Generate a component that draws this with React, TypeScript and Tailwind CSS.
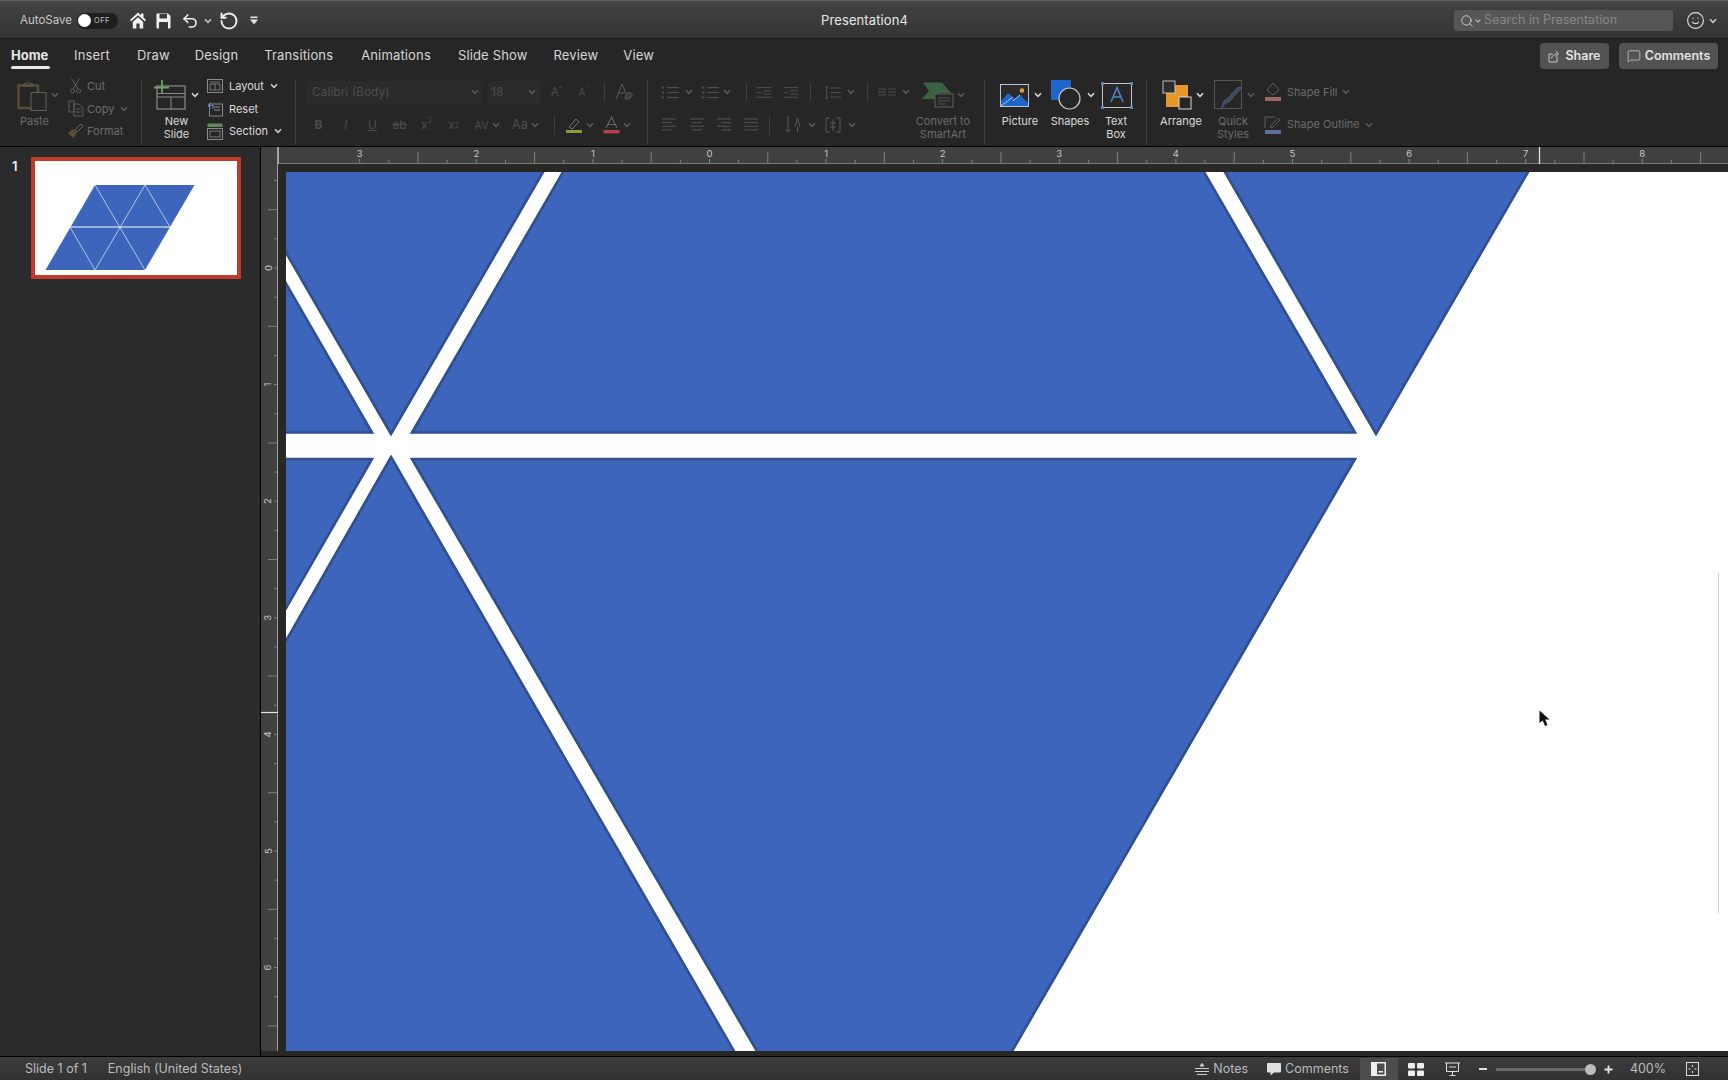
import React from "react";
import { Undo2, RotateCcw, Search, Smile, MessageSquare } from "lucide-react";

const DIM = "#4d4d4d";

function Chev({ c = "#d0d0d0", className = "" }: { c?: string; className?: string }) {
  return (
    <svg width="8" height="6" viewBox="0 0 8 6" className={"shrink-0 " + className}>
      <path d="M1 1.2 L4 4.4 L7 1.2" fill="none" stroke={c} strokeWidth="1.5" />
    </svg>
  );
}

function Sep({ className = "" }: { className?: string }) {
  return <div className={"w-px shrink-0 bg-[#3e3e3e] " + className} />;
}

function Lines({ w = 20, kind = "left" }: { w?: number; kind?: "left" | "center" | "right" | "just" | "bullet" | "num" | "indL" | "indR" | "space" | "cols" }) {
  const s = DIM;
  const rows: React.ReactNode[] = [];
  if (kind === "left") [[1, 15], [1, 11], [1, 15], [1, 11]].forEach((r, i) => rows.push(<path key={i} d={`M${r[0]} ${3 + i * 3.6}H${r[1]}`} />));
  if (kind === "center") [[2, 16], [4, 14], [2, 16], [4, 14]].forEach((r, i) => rows.push(<path key={i} d={`M${r[0]} ${3 + i * 3.6}H${r[1]}`} />));
  if (kind === "right") [[2, 16], [6, 16], [2, 16], [6, 16]].forEach((r, i) => rows.push(<path key={i} d={`M${r[0]} ${3 + i * 3.6}H${r[1]}`} />));
  if (kind === "just") [0, 1, 2, 3].forEach((i) => rows.push(<path key={i} d={`M2 ${3 + i * 3.6}H16`} />));
  if (kind === "bullet" || kind === "num") [0, 1, 2].forEach((i) => rows.push(<g key={i}><path d={`M7 ${3.5 + i * 5}H19`} /><path d={`M2 ${3.5 + i * 5}H${kind === "num" ? 4.5 : 4}`} strokeWidth="2" /></g>));
  if (kind === "indL" || kind === "indR") {
    [0, 1, 2, 3].forEach((i) => rows.push(<path key={i} d={`M${i === 0 || i === 3 ? 2 : 9} ${3 + i * 3.6}H18`} />));
    rows.push(<path key="a" d={kind === "indL" ? "M2 8.5H7" : "M7 8.5H2"} />);
  }
  if (kind === "space") {
    [0, 1, 2].forEach((i) => rows.push(<path key={i} d={`M7 ${3.5 + i * 5}H19`} />));
    rows.push(<path key="v" d="M3 1V16M1.5 2.5H4.5M1.5 14.5H4.5" />);
  }
  if (kind === "cols") {
    [0, 1, 2].forEach((i) => rows.push(<path key={i} d={`M1 ${5 + i * 3}H9M11 ${5 + i * 3}H19`} />));
  }
  return (
    <svg width={w} height="17" viewBox="0 0 20 17" className="shrink-0" fill="none" stroke={s} strokeWidth="1.2">
      {rows}
    </svg>
  );
}

function Big({ className = "", icon, label, dim = false }: { className?: string; icon: React.ReactNode; label: string[]; dim?: boolean }) {
  return (
    <div className={"flex flex-col items-center shrink-0 " + className}>
      <div className="h-[40px] w-full flex items-center">{icon}</div>
      <div className={"text-[11px] leading-[13px] text-center " + (dim ? "text-[#6c6c6c]" : "text-[#dcdcdc]")}>
        {label.map((l) => (
          <div key={l}>{l}</div>
        ))}
      </div>
    </div>
  );
}

function RowItem({ icon, text, chev, dim, chevClass = "ml-[6px]" }: { icon: React.ReactNode; text: string; chev?: boolean; dim?: boolean; chevClass?: string }) {
  return (
    <div className="h-[22.5px] flex items-center">
      {icon}
      <span className={"text-[11px] " + (dim ? "text-[#6c6c6c]" : "text-[#dcdcdc]")}>{text}</span>
      {chev && <Chev c={dim ? "#5c5c5c" : "#d8d8d8"} className={chevClass} />}
    </div>
  );
}

function Cell({ className = "", children }: { className?: string; children: React.ReactNode }) {
  return <div className={"flex items-center justify-center shrink-0 text-[#4d4d4d] " + className}>{children}</div>;
}

function Tab({ t, className = "" }: { t: string; className?: string }) {
  return <span className={"mt-[8px] text-[13px] leading-[16px] text-[#d6d6d6] tracking-[0.15px] " + className}>{t}</span>;
}

function ClipIcon() {
  return (
    <svg width="31" height="31" viewBox="0 0 31 31" className="shrink-0">
      <path d="M1.5 5.5H21V28H1.5Z" fill="none" stroke="#5c4c36" strokeWidth="2.4" />
      <path d="M7 6V3.5H9.5L11 1.5L12.8 3.5H15.5V6Z" fill="none" stroke="#5a5a5a" strokeWidth="1" />
      <rect x="14" y="12.5" width="15" height="18" fill="#262626" stroke="#5f5f5f" strokeWidth="1" />
    </svg>
  );
}

function NewSlideIcon() {
  return (
    <svg width="32" height="31" viewBox="0 0 32 31" className="shrink-0">
      <rect x="3" y="6" width="28" height="23" fill="none" stroke="#8a8a8a" strokeWidth="1.2" />
      <path d="M3 13.5H31M3 17H31M17 17V29" fill="none" stroke="#8a8a8a" strokeWidth="1" />
      <path d="M8 0V14M0 7.5H15" stroke="#6aa35f" strokeWidth="1.8" />
    </svg>
  );
}

function Polys() {
  return (
    <g fill="#3c65bb" stroke="#2f4f8e" strokeWidth="2.6">
      <polygon points="270,160 550,160 391,434 270,225" />
      <polygon points="270,256 372,432.5 270,432.5" />
      <polygon points="570,160 1197,160 1355,432.5 412,432.5" />
      <polygon points="1218,160 1535,160 1376,434" />
      <polygon points="270,459 372,459 270,636" />
      <polygon points="391,457 742,1065 270,1065 270,669" />
      <polygon points="412,459 1355,459 1004,1065 765,1065" />
    </g>
  );
}

const INCH = 116.6;

function HRuler() {
  const X0 = 709.5 - 278;
  const ticks: React.ReactNode[] = [];
  for (let q = -12; q <= 35; q++) {
    const x = X0 + (q * INCH) / 4;
    if (x < 0) continue;
    const mod = ((q % 4) + 4) % 4;
    const y1 = mod === 2 ? 5 : mod === 0 ? 12 : 13;
    ticks.push(<path key={q} d={`M${x} ${y1}V16`} stroke="#808080" strokeWidth="1" />);
    if (mod === 0)
      ticks.push(
        <text key={"t" + q} x={x} y={10} fontSize="9.5" fill="#c8c8c8" textAnchor="middle">
          {Math.abs(q / 4)}
        </text>
      );
  }
  return (
    <svg width="1450" height="17" className="block shrink-0 bg-[#404040]">
      <path d="M0 16.5H1450" stroke="#787878" />
      <path d="M0.5 0V17" stroke="#a8a8a8" />
      {ticks}
      <path d="M1261.5 0V17" stroke="#e8e8e8" strokeWidth="1.2" />
    </svg>
  );
}

function VRuler() {
  const Y0 = 268 - 147;
  const ticks: React.ReactNode[] = [];
  for (let q = -3; q <= 27; q++) {
    const y = Y0 + (q * INCH) / 4;
    const mod = ((q % 4) + 4) % 4;
    const x1 = mod === 2 ? 7 : 13;
    ticks.push(<path key={q} d={`M${x1} ${y}H16`} stroke="#808080" strokeWidth="1" />);
    if (mod === 0)
      ticks.push(
        <text key={"t" + q} x={7} y={y} fontSize="9.5" fill="#c8c8c8" textAnchor="middle" dominantBaseline="central" transform={`rotate(-90 7 ${y})`}>
          {Math.abs(q / 4)}
        </text>
      );
  }
  return (
    <svg width="17" height="904" className="block shrink-0 bg-[#404040]">
      <path d="M16.5 0V904" stroke="#a0a0a0" />
      {ticks}
      <path d="M0 565.5H17" stroke="#e8e8e8" strokeWidth="1.2" />
    </svg>
  );
}

export default function App() {
  return (
    <div className="w-[1728px] h-[1080px] flex flex-col overflow-hidden bg-[#262626] font-['Inter','Noto_Sans',sans-serif] text-[#d8d8d8]">
      {/* title bar */}
      <div className="h-[39px] shrink-0 flex items-center pt-[2px] bg-gradient-to-b from-[#434343] to-[#333333] border-t border-t-[#606060] border-b border-b-[#1c1c1c]">
        <div className="flex-1 flex items-center pl-[20px]">
          <span className="w-[51px] text-[11.5px] text-[#c8c8c8]">AutoSave</span>
          <div className="ml-[6px] w-[41px] h-[16px] rounded-full bg-[#1e1e1e] flex items-center pl-[1px]">
            <div className="w-[13px] h-[13px] rounded-full bg-white" />
            <span className="ml-[3px] text-[7.5px] text-[#c0c0c0] tracking-[0.4px]">OFF</span>
          </div>
          <svg width="16" height="17" viewBox="0 0 16 17" className="ml-[12px] shrink-0" fill="#f2f2f2">
            <path d="M8 0.5 L0 8 L1.2 9.3 L8 3.2 L14.8 9.3 L16 8 L13.5 5.6 V1.5 H11 V3.3Z" />
            <path d="M2.8 10 L8 5.2 L13.2 10 V16.5 H9.6 V11.5 H6.4 V16.5 H2.8Z" />
          </svg>
          <svg width="15" height="16" viewBox="0 0 15 16" className="ml-[10px] shrink-0">
            <path fillRule="evenodd" fill="#f2f2f2" d="M1.5 0.5H12L14.5 3V14.5C14.5 15 14 15.5 13.5 15.5H1.5C1 15.5 0.5 15 0.5 14.5V1.5C0.5 1 1 0.5 1.5 0.5ZM3.5 1V5.5H11V1ZM3 9V15.5H12V9Z" />
          </svg>
          <Undo2 size={18} strokeWidth={2.2} color="#eeeeee" className="ml-[10px] shrink-0" />
          <Chev c="#d0d0d0" className="ml-[5px]" />
          <RotateCcw size={20} strokeWidth={2.3} color="#eeeeee" className="ml-[7px] shrink-0" />
          <svg width="8" height="9" viewBox="0 0 8 9" className="ml-[11px] shrink-0" fill="#e4e4e4">
            <rect x="0.5" y="0.5" width="7" height="1.6" />
            <path d="M0 3.6H8L4 8.4Z" />
          </svg>
        </div>
        <div className="text-[13px] text-[#e8e8e8] tracking-[0.1px] mr-[8px]">Presentation4</div>
        <div className="flex-1 flex items-center justify-end pr-[11px]">
          <div className="w-[219px] h-[21px] rounded-[3px] bg-[#565656] flex items-center pl-[6px]">
            <Search size={14} color="#d0d0d0" strokeWidth={1.6} className="shrink-0" />
            <Chev c="#c0c0c0" className="w-[6px] ml-[1px]" />
            <span className="ml-[3px] text-[12.5px] text-[#868686]">Search in Presentation</span>
          </div>
          <Smile size={19} color="#dedede" strokeWidth={1.4} className="ml-[13px] shrink-0" />
          <Chev c="#d0d0d0" className="ml-[4px]" />
        </div>
      </div>

      {/* tabs */}
      <div className="h-[36px] shrink-0 flex items-start pl-[11px] pr-[10px] bg-[#262626]">
        <div className="flex items-start">
          <div className="flex flex-col w-[39px]">
            <span className="mt-[8px] text-[13px] leading-[16px] font-bold text-[#e6e6e6]">Home</span>
            <div className="mt-[3px] h-[3px] rounded-full bg-[#e8e8e8]" />
          </div>
          <Tab t="Insert" className="ml-[24px]" />
          <Tab t="Draw" className="ml-[27px]" />
          <Tab t="Design" className="ml-[25px]" />
          <Tab t="Transitions" className="ml-[26px]" />
          <Tab t="Animations" className="ml-[28px]" />
          <Tab t="Slide Show" className="ml-[27px]" />
          <Tab t="Review" className="ml-[26px]" />
          <Tab t="View" className="ml-[25px]" />
        </div>
        <div className="ml-auto flex items-center gap-[10px] mt-[4px]">
          <div className="w-[69px] h-[26px] rounded-[4px] bg-[#535353] flex items-center justify-center gap-[4px] text-[12.5px] font-semibold text-[#e2e2e2]">
            <svg width="13" height="13" viewBox="0 0 13 13" fill="none" stroke="#c8c8c8" strokeWidth="1">
              <path d="M9 6.5V12H1V4H4.5" />
              <path d="M3.5 8.5C4 5.5 6.5 3.8 9.5 3.8M7.6 1L10.6 3.8L7.6 6.5" />
            </svg>
            Share
          </div>
          <div className="w-[99px] h-[26px] rounded-[4px] bg-[#535353] flex items-center justify-center gap-[4px] text-[12.5px] font-semibold text-[#e2e2e2]">
            <MessageSquare size={14} color="#d0d0d0" strokeWidth={1.3} />
            Comments
          </div>
        </div>
      </div>

      {/* ribbon */}
      <div className="h-[72px] shrink-0 flex bg-[#262626] border-b border-b-black">
        {/* clipboard */}
        <div className="w-[141px] shrink-0 flex">
          <Big
            className="w-[64px] pl-[5px]"
            dim
            label={["Paste"]}
            icon={
              <div className="flex items-center pl-[12px]">
                <ClipIcon />
                <Chev c="#5c5c5c" className="ml-[3px]" />
              </div>
            }
          />
          <div className="flex flex-col">
            <RowItem
              dim
              text="Cut"
              icon={
                <div className="w-[23px] flex justify-center">
                  <svg width="11" height="16" viewBox="0 0 11 16" fill="none" stroke="#5f5f5f" strokeWidth="1">
                    <path d="M1.5 0.5L8 11M9.5 0.5L3 11" />
                    <circle cx="2.5" cy="13" r="2" />
                    <circle cx="8.5" cy="13" r="2" />
                  </svg>
                </div>
              }
            />
            <RowItem
              dim
              chev
              text="Copy"
              icon={
                <div className="w-[23px] flex justify-center">
                  <svg width="16" height="17" viewBox="0 0 16 17" fill="none" stroke="#5f5f5f" strokeWidth="1">
                    <path d="M1 1H6V12H1ZM6 4H11L15 8V16H6ZM8 9H13M8 12H13" />
                  </svg>
                </div>
              }
            />
            <RowItem
              dim
              text="Format"
              icon={
                <div className="w-[23px] flex justify-center">
                  <svg width="17" height="16" viewBox="0 0 17 16">
                    <path d="M1 10 L6 6 L10 10 L6 15 Z" fill="#5a4f3a" />
                    <path d="M8 7 L14 1 L16 3 L10 9Z" fill="none" stroke="#666" />
                  </svg>
                </div>
              }
            />
          </div>
        </div>
        <Sep className="h-[66px] mt-[4px]" />
        {/* slides */}
        <div className="w-[153px] shrink-0 flex">
          <Big
            className="w-[59px] ml-[5px]"
            label={["New", "Slide"]}
            icon={
              <div className="flex items-center pl-[7px]">
                <NewSlideIcon />
                <Chev c="#e0e0e0" className="ml-[5px]" />
              </div>
            }
          />
          <div className="flex flex-col ml-[1px]">
            <RowItem
              chev
              text="Layout"
              icon={
                <svg width="16" height="16" viewBox="0 0 16 16" fill="none" stroke="#8a8a8a" className="mr-[6px]">
                  <rect x="0.5" y="1.5" width="15" height="13" />
                  <path d="M3 4H13M3 6H13V12H3ZM8 6V12" strokeWidth="0.8" />
                </svg>
              }
            />
            <RowItem
              text="Reset"
              icon={
                <svg width="16" height="16" viewBox="0 0 16 16" fill="none" className="mr-[6px]">
                  <rect x="2.5" y="3" width="13" height="12" stroke="#8a8a8a" />
                  <path d="M7 6H13M7 9H13" stroke="#8a8a8a" />
                  <path d="M1 4.5L3.5 1.5M1 4.5L3.5 7M1 4.5H6V8" stroke="#5e86b8" strokeWidth="1.1" />
                </svg>
              }
            />
            <RowItem
              chev
              text="Section"
              icon={
                <svg width="16" height="17" viewBox="0 0 16 17" fill="none" className="mr-[6px]">
                  <rect x="0.5" y="0.5" width="15" height="3.5" fill="#5f8a5a" />
                  <rect x="0.5" y="5.5" width="15" height="11" stroke="#8a8a8a" />
                  <rect x="3" y="8" width="10" height="6" stroke="#8a8a8a" strokeWidth="0.8" />
                </svg>
              }
            />
          </div>
        </div>
        <Sep className="h-[66px] mt-[4px]" />
        {/* font */}
        <div className="w-[351px] shrink-0 flex flex-col pt-[1px]">
          <div className="h-[32px] flex items-center pl-[11px]">
            <div className="w-[176px] h-[23px] bg-[#2b2b2b] flex items-center justify-between pl-[5px] pr-[4px] text-[12px] text-[#4d4d4d]">
              Calibri (Body)
              <Chev c="#5c5c5c" />
            </div>
            <div className="ml-[5px] w-[52px] h-[23px] bg-[#2b2b2b] flex items-center justify-between pl-[3px] pr-[4px] text-[12px] text-[#4d4d4d]">
              18
              <Chev c="#5c5c5c" />
            </div>
            <Cell className="w-[27px] ml-[3px] text-[12px]">A<sup className="text-[7px]">^</sup></Cell>
            <Cell className="w-[27px] text-[10px]">A<sup className="text-[7px]">ˇ</sup></Cell>
            <Sep className="h-[20px] ml-[7px]" />
            <svg width="20" height="20" viewBox="0 0 20 20" className="ml-[9px] shrink-0" fill="none" stroke="#5a5a5a">
              <path d="M2 17L8 2L13 14" />
              <path d="M5 11H11" />
              <path d="M11 15L15 10L18.5 13L15 17H12Z" fill="#3a3a3a" />
            </svg>
          </div>
          <div className="h-[33px] flex items-center pl-[9px]">
            <Cell className="w-[27px] text-[12px] font-bold">B</Cell>
            <Cell className="w-[27px] text-[12px] italic">I</Cell>
            <Cell className="w-[27px] text-[12px] underline">U</Cell>
            <Cell className="w-[27px] text-[12px] line-through">ab</Cell>
            <Cell className="w-[27px] text-[12px]">x<sup className="text-[7px]">2</sup></Cell>
            <Cell className="w-[27px] text-[12px]">x<sub className="text-[7px]">2</sub></Cell>
            <Cell className="w-[38px] pl-[2px] gap-[3px] text-[11px]">
              <span className="leading-[10px]">AV</span>
              <Chev c="#5c5c5c" />
            </Cell>
            <Cell className="w-[40px] pl-[1px] gap-[3px] text-[13px]">
              Aa
              <Chev c="#5c5c5c" />
            </Cell>
            <Sep className="h-[20px] ml-[9px]" />
            <Cell className="w-[38px] ml-[5px] gap-[3px]">
              <svg width="18" height="18" viewBox="0 0 18 18" fill="none">
                <path d="M4 11L11 3L14 6L7 13Z" stroke="#777" />
                <rect x="1" y="14" width="16" height="3" fill="#8c9c3d" />
              </svg>
              <Chev c="#5c5c5c" />
            </Cell>
            <Cell className="w-[38px] gap-[3px]">
              <svg width="17" height="18" viewBox="0 0 17 18" fill="none">
                <path d="M3 12L8.5 1L14 12M5 8.5H12" stroke="#666" strokeWidth="1.1" />
                <rect x="0.5" y="14" width="16" height="3.4" fill="#b2444f" />
              </svg>
              <Chev c="#5c5c5c" />
            </Cell>
          </div>
        </div>
        <Sep className="h-[66px] mt-[4px]" />
        {/* paragraph */}
        <div className="w-[336px] shrink-0 flex">
          <div className="w-[262px] flex flex-col pt-[1px]">
            <div className="h-[32px] flex items-center pl-[12px]">
              <Lines kind="bullet" />
              <Chev c="#5c5c5c" className="ml-[5px]" />
              <div className="ml-[7px]"><Lines kind="num" /></div>
              <Chev c="#5c5c5c" className="ml-[3px]" />
              <Sep className="h-[20px] ml-[15px]" />
              <div className="ml-[8px]"><Lines w={18} kind="indL" /></div>
              <div className="ml-[9px]"><Lines w={18} kind="indR" /></div>
              <Sep className="h-[20px] ml-[10px]" />
              <div className="ml-[13px]"><Lines w={18} kind="space" /></div>
              <Chev c="#5c5c5c" className="ml-[5px]" />
              <Sep className="h-[20px] ml-[12px]" />
              <div className="ml-[9px]"><Lines kind="cols" /></div>
              <Chev c="#5c5c5c" className="ml-[5px]" />
            </div>
            <div className="h-[33px] flex items-center pl-[13px] text-[#4d4d4d]">
              <div className="flex gap-[7px]">
                <Lines kind="left" />
                <Lines kind="center" />
                <Lines kind="right" />
                <Lines kind="just" />
              </div>
              <Sep className="h-[20px] ml-[7px]" />
              <svg width="16" height="19" viewBox="0 0 16 19" className="ml-[15px] shrink-0" fill="none" stroke="#5a5a5a">
                <path d="M3 1V17M0.5 14.5L3 17L5.5 14.5M10 12L12.5 3L15 12M12.5 12V17" />
              </svg>
              <Chev c="#5c5c5c" className="ml-[7px]" />
              <svg width="16" height="16" viewBox="0 0 16 16" className="ml-[9px] shrink-0" fill="none" stroke="#5a5a5a">
                <path d="M5 1H1V15H5M11 1H15V15H11M8 2V14M5 6H11M5 10H11" />
              </svg>
              <Chev c="#5c5c5c" className="ml-[7px]" />
            </div>
          </div>
          <Big
            className="w-[66px]"
            dim
            label={["Convert to", "SmartArt"]}
            icon={
              <div className="flex items-center pl-[10px]">
                <svg width="34" height="26" viewBox="0 0 34 26" className="shrink-0">
                  <path d="M3 0.5H22L31 11H19V17H1.5L9 9Z" fill="#3c6145" />
                  <rect x="15" y="12" width="18" height="13" fill="#262626" stroke="#5f5f5f" />
                  <path d="M18 16H30M18 19H30M18 22H26" stroke="#5f5f5f" strokeWidth="0.8" />
                </svg>
                <Chev c="#5c5c5c" className="ml-[3px]" />
              </div>
            }
          />
        </div>
        <Sep className="h-[66px] mt-[4px]" />
        {/* insert */}
        <div className="w-[161px] shrink-0 flex pl-[9px]">
          <Big
            className="w-[52px]"
            label={["Picture"]}
            icon={
              <div className="flex items-center pl-[6px]">
                <svg width="29" height="23" viewBox="0 0 29 23" className="shrink-0">
                  <rect x="0.5" y="0.5" width="28" height="22" fill="#2b2b2b" stroke="#b8c6dc" />
                  <path d="M1 21V17L8 9L15 15L20 11L28 19V22H1Z" fill="#1f66cc" />
                  <path d="M1 22L13 13M13 17L20 11" stroke="#b8c6dc" strokeWidth="1" fill="none" />
                  <circle cx="22" cy="6.5" r="2.3" fill="#e39a3a" />
                </svg>
                <Chev c="#e0e0e0" className="ml-[5px]" />
              </div>
            }
          />
          <Big
            className="w-[48px]"
            label={["Shapes"]}
            icon={
              <div className="flex items-center pl-[5px]">
                <svg width="30" height="30" viewBox="0 0 30 30" className="shrink-0">
                  <rect x="0" y="0" width="20" height="20" fill="#1f66cc" />
                  <circle cx="18.5" cy="18.5" r="10.5" fill="#262626" stroke="#c9c9c9" strokeWidth="1.2" />
                </svg>
                <Chev c="#e0e0e0" className="ml-[6px]" />
              </div>
            }
          />
          <Big
            className="w-[44px]"
            label={["Text", "Box"]}
            icon={
              <div className="pl-[7px]">
                <svg width="32" height="27" viewBox="0 0 32 27" className="shrink-0" fill="none">
                  <rect x="1.5" y="1.5" width="29" height="24" stroke="#c4c4c4" />
                  <rect x="0" y="0" width="3" height="3" fill="#5486c4" />
                  <rect x="29" y="0" width="3" height="3" fill="#5486c4" />
                  <rect x="0" y="24" width="3" height="3" fill="#5486c4" />
                  <rect x="29" y="24" width="3" height="3" fill="#5486c4" />
                  <path d="M10 20L16 5.5L22 20M12 15H20" stroke="#4f87c9" strokeWidth="1.5" />
                </svg>
              </div>
            }
          />
        </div>
        <Sep className="h-[66px] mt-[4px]" />
        {/* drawing */}
        <div className="flex-1 flex pl-[6px]">
          <Big
            className="w-[56px]"
            label={["Arrange"]}
            icon={
              <div className="flex items-center pl-[9px]">
                <svg width="30" height="30" viewBox="0 0 30 30" className="shrink-0">
                  <rect x="4" y="5" width="22" height="22" fill="#e8982a" />
                  <rect x="1" y="1" width="12" height="12" fill="#2c2c2c" stroke="#c0c0c0" />
                  <rect x="17" y="17" width="12" height="12" fill="#262626" stroke="#d8d8d8" />
                </svg>
                <Chev c="#e0e0e0" className="ml-[4px]" />
              </div>
            }
          />
          <Big
            className="w-[48px]"
            dim
            label={["Quick", "Styles"]}
            icon={
              <div className="flex items-center pl-[5px]">
                <svg width="30" height="30" viewBox="0 0 30 30" className="shrink-0" fill="none">
                  <rect x="0.5" y="0.5" width="27" height="28" stroke="#555" />
                  <path d="M8 29C9 24 13 22 15 22L28 7L23 8L13 19C10 20 8 24 8 29Z" fill="#3f4860" stroke="#4f5a78" />
                </svg>
                <Chev c="#5c5c5c" className="ml-[3px]" />
              </div>
            }
          />
          <div className="flex flex-col pt-[1px] pl-[7px]">
            <div className="h-[32px] flex items-center">
              <svg width="18" height="20" viewBox="0 0 18 20" className="shrink-0" fill="none">
                <path d="M9 1L15 8L9 13L3 8Z" stroke="#5f5f5f" />
                <rect x="1" y="15" width="16" height="4" fill="#9a6a5e" />
              </svg>
              <span className="ml-[5px] text-[11px] text-[#6c6c6c]">Shape Fill</span>
              <Chev c="#5c5c5c" className="ml-[5px]" />
            </div>
            <div className="h-[33px] flex items-center">
              <svg width="18" height="20" viewBox="0 0 18 20" className="shrink-0" fill="none">
                <path d="M1 13V2H11M6 12L14 3L16 5L8 13Z" stroke="#5f5f5f" />
                <rect x="1" y="15" width="16" height="4" fill="#5f6f9a" />
              </svg>
              <span className="ml-[5px] text-[11px] text-[#6c6c6c]">Shape Outline</span>
              <Chev c="#5c5c5c" className="ml-[5px]" />
            </div>
          </div>
        </div>
      </div>

      {/* main */}
      <div className="flex-1 min-h-0 flex border-b border-b-black">
        <div className="w-[261px] shrink-0 bg-[#2a2b2c] border-r border-r-black flex items-start pt-[10px] pl-[12px]">
          <span className="w-[19px] text-[13px] font-semibold text-[#efefef] leading-[18px]">1</span>
          <div className="w-[210px] h-[122px] shrink-0 border-[4px] border-[#c23b2a] bg-white">
            <svg viewBox="35 161 202 114" className="block w-[202px] h-[114px]">
              <polygon points="95,185 194.5,185 145,270 45.5,270" fill="#3c65bb" />
              <path d="M70 227H170" stroke="#fff" strokeWidth="1" />
              <path d="M95 185L145 270M145 185L95 270M145 185L170 227M70 227L95 270" stroke="#e6ecf8" strokeWidth="0.7" />
            </svg>
          </div>
        </div>
        <div className="flex-1 min-w-0 flex bg-[#282827]">
          <div className="flex flex-col shrink-0">
            <VRuler />
          </div>
          <div className="flex-1 min-w-0 flex flex-col">
            <HRuler />
            <div className="h-[8px] shrink-0" />
            <div className="ml-[8px] h-[879px] shrink-0 relative bg-white">
              <svg viewBox="286 172 1442 879" className="block w-full h-full">
                <Polys />
              </svg>
              <div className="absolute left-[1432px] top-[401px] w-px h-[340px] bg-[#cfcfcf]" />
              <svg width="12" height="18" viewBox="0 0 12 18" className="absolute left-[1253px] top-[538px]">
                <path d="M0.5 0.5V13L3.7 10.5L6 16L8.5 15L6.2 9.6H10.5Z" fill="#111" />
              </svg>
            </div>
          </div>
        </div>
      </div>

      {/* status */}
      <div className="h-[23px] shrink-0 flex items-center pt-[1px] bg-gradient-to-b from-[#3c3c3c] to-[#323232] text-[12.5px] text-[#bcbcbc]">
        <span className="ml-[25px]">Slide 1 of 1</span>
        <span className="ml-[21px]">English (United States)</span>
        <div className="ml-auto flex items-center h-full">
          <svg width="14" height="13" viewBox="0 0 14 13" fill="none" stroke="#d0d0d0" strokeWidth="1">
            <path d="M5 3L7 0.5L9 3Z" fill="#d0d0d0" />
            <path d="M0 5.5H14M0 8.5H14M2 11.5H12" />
          </svg>
          <span className="ml-[4px]">Notes</span>
          <svg width="14" height="13" viewBox="0 0 14 13" className="ml-[19px]" fill="#e0e0e0">
            <path d="M1 0H13C13.6 0 14 .4 14 1V8.5C14 9 13.6 9.5 13 9.5H7L3.5 12.5V9.5H1C.4 9.5 0 9 0 8.5V1C0 .4 .4 0 1 0Z" />
          </svg>
          <span className="ml-[4px]">Comments</span>
          <div className="ml-[11px] w-[38px] h-full bg-[#4c4c4c] flex items-center justify-center">
            <svg width="15" height="14" viewBox="0 0 15 14">
              <path fillRule="evenodd" fill="#efefef" d="M0 0H15V14H0ZM6 1.5V12.5H13.5V1.5ZM7.5 9H12V10.5H7.5Z" />
            </svg>
          </div>
          <svg width="16" height="13" viewBox="0 0 16 13" className="ml-[10px]" fill="#efefef">
            <rect width="7" height="5.5" rx="1" />
            <rect x="9" width="7" height="5.5" rx="1" />
            <rect y="7.5" width="7" height="5.5" rx="1" />
            <rect x="9" y="7.5" width="7" height="5.5" rx="1" />
          </svg>
          <svg width="15" height="14" viewBox="0 0 15 14" className="ml-[21px]" fill="none" stroke="#e0e0e0">
            <path d="M0 1H15M1.5 1V9.5H13.5V1M7.5 9.5V13.5M4.5 13.5H10.5M4 5H11" />
          </svg>
          <div className="ml-[19px] w-[8px] h-[2px] bg-[#e0e0e0]" />
          <div className="ml-[9px] w-[94px] h-[3px] bg-[#6a6a6a]" />
          <div className="ml-[-5px] w-[11px] h-[11px] rounded-full bg-[#bdbdbd]" />
          <svg width="9" height="9" viewBox="0 0 9 9" className="ml-[8px]" stroke="#e8e8e8" strokeWidth="1.8">
            <path d="M4.5 0.5V8.5M0.5 4.5H8.5" />
          </svg>
          <span className="ml-[17px]">400%</span>
          <svg width="13" height="14" viewBox="0 0 13 14" className="ml-[20px] mr-[29px]" fill="none" stroke="#dcdcdc">
            <rect x="0.5" y="0.5" width="12" height="13" />
            <path d="M6.5 3V5M6.5 9V11M2.5 7H4.5M8.5 7H10.5" />
          </svg>
        </div>
      </div>
    </div>
  );
}
